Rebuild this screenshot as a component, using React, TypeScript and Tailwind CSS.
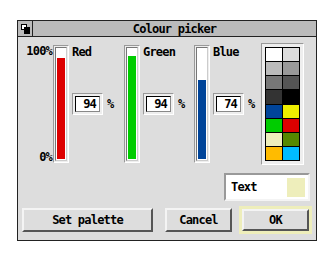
const font = { fontFamily: '"DejaVu Sans Mono", "Liberation Mono", monospace' };

const palette = [
  "#ffffff", "#dddddd",
  "#bbbbbb", "#999999",
  "#777777", "#555555",
  "#333333", "#000000",
  "#004499", "#eeee00",
  "#00cc00", "#dd0000",
  "#eeeebb", "#558800",
  "#ffbb00", "#00bbff",
];

function Slider({ color, value }: { color: string; value: number }) {
  return (
    <div className="w-[16px] h-[118px] shrink-0 border border-t-[#999] border-l-[#999] border-r-[#fff] border-b-[#fff] bg-[#eeeeee] p-[1px]">
      <div className="w-full h-full border border-t-[#777] border-l-[#777] border-r-[#ccc] border-b-[#ccc] bg-white p-[1px] flex flex-col justify-end">
        <div className="w-full" style={{ height: `${value}%`, background: color }} />
      </div>
    </div>
  );
}

function NumberBox({ value }: { value: string }) {
  return (
    <div className="flex items-center">
      <div className="w-[31px] h-[22px] border border-t-[#999] border-l-[#999] border-r-[#fff] border-b-[#fff] bg-[#eeeeee] p-[2px]">
        <div className="w-full h-full bg-white border border-t-black border-l-black border-r-[#888] border-b-[#888] flex items-center justify-end pr-[3px] leading-none">
          {value}
        </div>
      </div>
      <span className="ml-[4px]">%</span>
    </div>
  );
}

function Channel({ label, value }: { label: string; value: string }) {
  return (
    <div className="h-[118px] flex flex-col">
      <span className="leading-[12px] mt-[1px]">{label}</span>
      <div className="mt-[35px]">
        <NumberBox value={value} />
      </div>
    </div>
  );
}

function Button({ label, className }: { label: string; className: string }) {
  return (
    <div
      className={`h-[24px] bg-[#dddddd] border-2 border-t-[#f4f4f4] border-l-[#f4f4f4] border-r-[#555] border-b-[#555] flex items-center justify-center ${className}`}
    >
      {label}
    </div>
  );
}

export default function App() {
  return (
    <div className="w-[336px] h-[260px] bg-white pt-[20px] pl-[17px] text-black text-[12px] font-bold tracking-[-0.8px]" style={font}>
      <div className="w-[300px] h-[221px] border border-[#222] bg-[#dddddd] flex flex-col">
        <div className="h-[16px] flex border-b border-[#222] bg-[#bbbbbb] shrink-0">
          <div className="w-[15px] h-full border-r border-[#222] flex items-center justify-center">
            <svg width="9" height="10" viewBox="0 0 9 10">
              <rect x="0.5" y="0.5" width="5" height="5" fill="white" stroke="black" />
              <rect x="3" y="3" width="6" height="7" fill="black" />
            </svg>
          </div>
          <div className="flex-1 flex items-center justify-center leading-none">
            Colour picker
          </div>
        </div>

        <div className="flex items-start mt-[6px]">
          <div className="w-[35px] h-[118px] mt-[2px] flex flex-col justify-between items-end pr-[1px] leading-[12px]">
            <span>100%</span>
            <span>0%</span>
          </div>
          <div className="mt-[2px]">
            <Slider color="#dd0000" value={92} />
          </div>
          <div className="ml-[3px] w-[52px] mt-[2px]">
            <Channel label="Red" value="94" />
          </div>
          <div className="mt-[2px]">
            <Slider color="#00cc00" value={94} />
          </div>
          <div className="ml-[3px] w-[51px] mt-[2px]">
            <Channel label="Green" value="94" />
          </div>
          <div className="mt-[2px]">
            <Slider color="#004499" value={72} />
          </div>
          <div className="ml-[3px] w-[48px] mt-[2px]">
            <Channel label="Blue" value="74" />
          </div>
          <div className="w-[43px] h-[122px] border border-t-[#999] border-l-[#999] border-r-[#fff] border-b-[#fff] bg-[#eeeeee] p-[3px]">
            <div className="w-full h-full bg-black p-[1px] grid grid-cols-2 grid-rows-8 gap-[1px]">
              {palette.map((c, i) => (
                <div key={i} style={{ background: c }} />
              ))}
            </div>
          </div>
        </div>

        <div className="flex justify-end mt-[8px] pr-[6px]">
          <div className="w-[86px] h-[28px] border-2 border-t-[#999] border-l-[#999] border-r-[#f4f4f4] border-b-[#f4f4f4] bg-white flex items-center justify-between pl-[5px] pr-[3px]">
            <span>Text</span>
            <div className="w-[18px] h-[19px] bg-[#eeeebb]" />
          </div>
        </div>

        <div className="flex items-center mt-[5px] pl-[4px]">
          <Button label="Set palette" className="w-[131px]" />
          <Button label="Cancel" className="w-[67px] ml-[12px]" />
          <div className="ml-[7px] w-[73px] h-[28px] border-2 border-[#eeeebb] bg-[#eeeebb] p-[1px]">
            <Button label="OK" className="w-full h-full" />
          </div>
        </div>
      </div>
    </div>
  );
}
